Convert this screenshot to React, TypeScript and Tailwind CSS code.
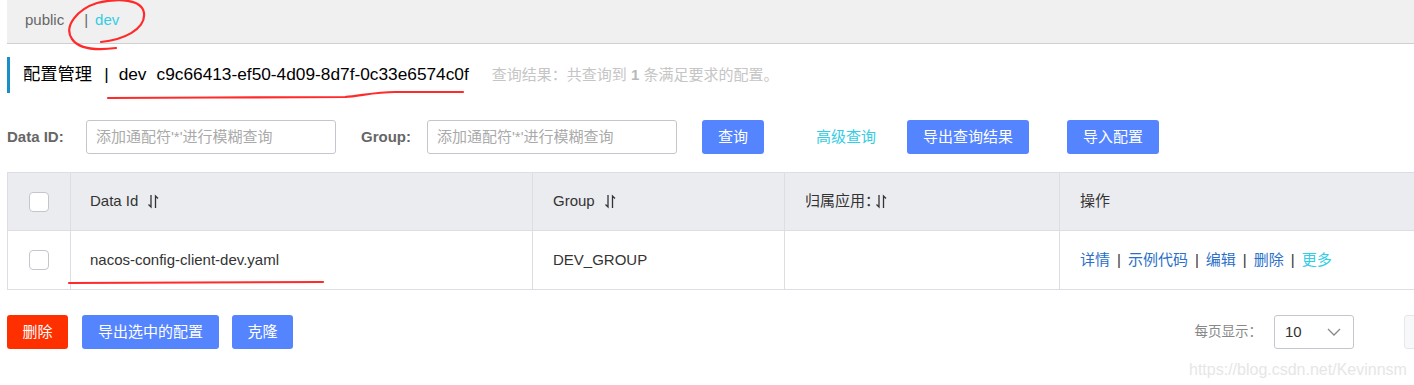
import React from 'react'

const font = { fontFamily: '"Liberation Sans", "Noto Sans CJK SC", sans-serif' }

function SortIcon({ ml = 'ml-[10px]' }: { ml?: string }) {
  return (
    <svg width="11" height="15" viewBox="0 0 11 15" className={`${ml} shrink-0`}>
      <path d="M3 1v12L0.5 10.5" fill="none" stroke="#333" strokeWidth="1.3" />
      <path d="M7.5 14V2l2.5 2.5" fill="none" stroke="#333" strokeWidth="1.3" />
    </svg>
  )
}

function Checkbox() {
  return <div className="h-[20px] w-[20px] rounded-[4px] border border-[#c4c6cf] bg-white" />
}

function Btn({ children, w, red }: { children: React.ReactNode; w: string; red?: boolean }) {
  return (
    <div
      className={`flex h-[34px] items-center justify-center rounded-[3px] text-[15px] text-white ${w} ${
        red ? 'bg-[#ff3000]' : 'bg-[#5584ff]'
      }`}
    >
      {children}
    </div>
  )
}

const cols = 'grid grid-cols-[62px_462px_252px_275px_1fr]'

export default function App() {
  return (
    <div className="relative h-[385px] w-[1414px] overflow-hidden bg-white" style={font}>
      <div className="ml-[7px] w-[1440px]">
        {/* namespace bar */}
        <div className="flex h-[44px] items-center border-b border-[#cfcfcf] bg-[#f0f0f0] pl-[18px] pb-[3px] text-[15px]">
          <span className="text-[#666]">public</span>
          <span className="ml-[20px] text-[#666]">|</span>
          <span className="ml-[7px] text-[#33cde5]">dev</span>
        </div>

        {/* title */}
        <div className="mt-[13px] flex h-[36px] items-center border-l-[3px] border-[#1a8fc6] pl-[13px]">
          <div className="flex items-center text-[17.3px] text-black">
            <span>配置管理</span>
            <span className="ml-[12px]">|</span>
            <span className="ml-[10px]">dev</span>
            <span className="ml-[10px]">c9c66413-ef50-4d09-8d7f-0c33e6574c0f</span>
          </div>
          <span className="ml-[23px] text-[15px] text-[#c5c5c5]">
            查询结果：共查询到 <b className="text-[#b8b8b8]">1</b> 条满足要求的配置。
          </span>
        </div>

        {/* search row */}
        <div className="mt-[27px] flex h-[34px] items-center text-[15px]">
          <span className="w-[79px] font-bold text-[#666]">Data ID:</span>
          <div className="flex h-[34px] w-[250px] items-center rounded-[3px] border border-[#c4c6cf] pl-[9px] text-[#aaa]">
            添加通配符'*'进行模糊查询
          </div>
          <span className="ml-[25px] w-[66px] font-bold text-[#666]">Group:</span>
          <div className="flex h-[34px] w-[250px] items-center rounded-[3px] border border-[#c4c6cf] pl-[9px] text-[#aaa]">
            添加通配符'*'进行模糊查询
          </div>
          <div className="ml-[25px]">
            <Btn w="w-[62px]">查询</Btn>
          </div>
          <span className="ml-[52px] text-[#33cde5]">高级查询</span>
          <div className="ml-[31px]">
            <Btn w="w-[122px]">导出查询结果</Btn>
          </div>
          <div className="ml-[38px]">
            <Btn w="w-[92px]">导入配置</Btn>
          </div>
        </div>

        {/* table */}
        <div className="mt-[18px] border border-[#dcdee3] text-[15px] text-[#333]">
          <div className={`${cols} h-[58px] border-b border-[#dcdee3] bg-[#ebecf0]`}>
            <div className="flex items-center justify-center">
              <Checkbox />
            </div>
            <div className="flex items-center border-l border-[#dcdee3] pl-[19px]">
              Data Id <SortIcon />
            </div>
            <div className="flex items-center border-l border-[#dcdee3] pl-[20px]">
              Group <SortIcon />
            </div>
            <div className="flex items-center border-l border-[#dcdee3] pl-[20px]">
              归属应用：<SortIcon ml="ml-[-4px]" />
            </div>
            <div className="flex items-center border-l border-[#dcdee3] pl-[20px]">操作</div>
          </div>
          <div className={`${cols} h-[58px]`}>
            <div className="flex items-center justify-center">
              <Checkbox />
            </div>
            <div className="flex items-center border-l border-[#dcdee3] pl-[19px]">
              nacos-config-client-dev.yaml
            </div>
            <div className="flex items-center border-l border-[#dcdee3] pl-[20px]">DEV_GROUP</div>
            <div className="border-l border-[#dcdee3]" />
            <div className="flex items-center gap-[7px] border-l border-[#dcdee3] pl-[20px] text-[#2a6fc9]">
              <span>详情</span>
              <span className="text-[#333]">|</span>
              <span>示例代码</span>
              <span className="text-[#333]">|</span>
              <span>编辑</span>
              <span className="text-[#333]">|</span>
              <span>删除</span>
              <span className="text-[#333]">|</span>
              <span className="text-[#33cde5]">更多</span>
            </div>
          </div>
        </div>

        {/* bottom row */}
        <div className="mt-[25px] flex h-[34px] items-center text-[15px]">
          <Btn w="w-[61px]" red>
            删除
          </Btn>
          <div className="ml-[14px]">
            <Btn w="w-[137px]">导出选中的配置</Btn>
          </div>
          <div className="ml-[13px]">
            <Btn w="w-[61px]">克隆</Btn>
          </div>
          <div className="ml-auto mr-[9px] flex items-center">
            <span className="whitespace-nowrap text-[13.5px] text-[#888]">每页显示：</span>
            <div className="ml-[12px] flex h-[34px] w-[80px] items-center justify-between rounded-[3px] border border-[#c4c6cf] pl-[10px] pr-[12px] text-[#333]">
              <span>10</span>
              <svg width="14" height="9" viewBox="0 0 14 9">
                <path d="M1 1l6 6 6-6" fill="none" stroke="#888" strokeWidth="1.3" />
              </svg>
            </div>
            <div className="ml-[50px] h-[34px] w-[34px] rounded-[3px] border border-[#e6e7eb] bg-[#f7f8fa]" />
          </div>
        </div>
      </div>

      {/* watermark */}
      <div className="pointer-events-none absolute left-[1189px] top-[358px] text-[16px] text-[#e6e6e6]">
        https://blog.csdn.net/Kevinnsm
      </div>

      {/* hand-drawn annotations */}
      <svg className="pointer-events-none absolute left-0 top-0" width="1414" height="385">
        <g fill="none" stroke="#ff2a2a" strokeWidth="2.2" strokeLinecap="round">
          <path d="M101 42 C 122 40, 146 30, 144 13 C 142 -1, 118 -2, 97 3 C 78 9, 63 26, 72 39 C 78 48, 92 51, 116 48" />
          <path d="M108 98 C 180 97, 280 98, 345 97 C 360 96, 375 92, 395 92 L 463 92" />
          <path d="M69 283 L 323 282" />
        </g>
      </svg>
    </div>
  )
}
